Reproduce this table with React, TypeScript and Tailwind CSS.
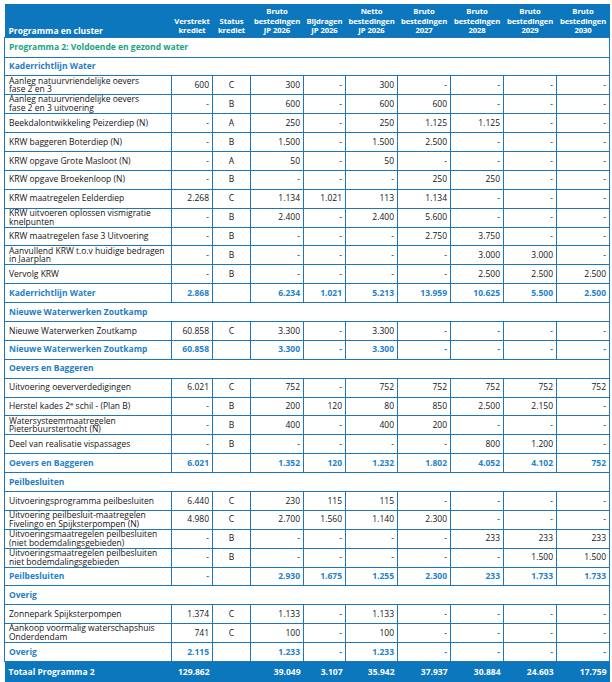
type Row = {
  kind: 'data' | 'total' | 'head';
  label: React.ReactNode;
  v?: string[];
};

const rows: Row[] = [
  { kind: 'head', label: 'Kaderrichtlijn Water' },
  { kind: 'data', label: 'Aanleg natuurvriendelijke oevers\nfase 2 en 3', v: ['600', 'C', '300', '-', '300', '-', '-', '-', '-'] },
  { kind: 'data', label: 'Aanleg natuurvriendelijke oevers\nfase 2 en 3 uitvoering', v: ['-', 'B', '600', '-', '600', '600', '-', '-', '-'] },
  { kind: 'data', label: 'Beekdalontwikkeling Peizerdiep (N)', v: ['-', 'A', '250', '-', '250', '1.125', '1.125', '-', '-'] },
  { kind: 'data', label: 'KRW baggeren Boterdiep (N)', v: ['-', 'B', '1.500', '-', '1.500', '2.500', '-', '-', '-'] },
  { kind: 'data', label: 'KRW opgave Grote Masloot (N)', v: ['-', 'A', '50', '-', '50', '-', '-', '-', '-'] },
  { kind: 'data', label: 'KRW opgave Broekenloop (N)', v: ['-', 'B', '-', '-', '-', '250', '250', '-', '-'] },
  { kind: 'data', label: 'KRW maatregelen Eelderdiep', v: ['2.268', 'C', '1.134', '1.021', '113', '1.134', '-', '-', '-'] },
  { kind: 'data', label: 'KRW uitvoeren oplossen vismigratie\nknelpunten', v: ['-', 'B', '2.400', '-', '2.400', '5.600', '-', '-', '-'] },
  { kind: 'data', label: 'KRW maatregelen fase 3 Uitvoering', v: ['-', 'B', '-', '-', '-', '2.750', '3.750', '-', '-'] },
  { kind: 'data', label: 'Aanvullend KRW t.o.v huidige bedragen\nin Jaarplan', v: ['-', 'B', '-', '-', '-', '-', '3.000', '3.000', '-'] },
  { kind: 'data', label: 'Vervolg KRW', v: ['-', 'B', '-', '-', '-', '-', '2.500', '2.500', '2.500'] },
  { kind: 'total', label: 'Kaderrichtlijn Water', v: ['2.868', '', '6.234', '1.021', '5.213', '13.959', '10.625', '5.500', '2.500'] },
  { kind: 'head', label: 'Nieuwe Waterwerken Zoutkamp' },
  { kind: 'data', label: 'Nieuwe Waterwerken Zoutkamp', v: ['60.858', 'C', '3.300', '-', '3.300', '-', '-', '-', '-'] },
  { kind: 'total', label: 'Nieuwe Waterwerken Zoutkamp', v: ['60.858', '', '3.300', '-', '3.300', '-', '-', '-', '-'] },
  { kind: 'head', label: 'Oevers en Baggeren' },
  { kind: 'data', label: 'Uitvoering oeververdedigingen', v: ['6.021', 'C', '752', '-', '752', '752', '752', '752', '752'] },
  {
    kind: 'data',
    label: (
      <>
        Herstel kades 2<sup className="text-[6px]">e</sup> schil - (Plan B)
      </>
    ),
    v: ['-', 'B', '200', '120', '80', '850', '2.500', '2.150', '-'],
  },
  { kind: 'data', label: 'Watersysteemmaatregelen\nPieterbuurstertocht (N)', v: ['-', 'B', '400', '-', '400', '200', '-', '-', '-'] },
  { kind: 'data', label: 'Deel van realisatie vispassages', v: ['-', 'B', '-', '-', '-', '-', '800', '1.200', '-'] },
  { kind: 'total', label: 'Oevers en Baggeren', v: ['6.021', '', '1.352', '120', '1.232', '1.802', '4.052', '4.102', '752'] },
  { kind: 'head', label: 'Peilbesluiten' },
  { kind: 'data', label: 'Uitvoeringsprogramma peilbesluiten', v: ['6.440', 'C', '230', '115', '115', '-', '-', '-', '-'] },
  { kind: 'data', label: 'Uitvoering peilbesluit-maatregelen\nFivelingo en Spijksterpompen (N)', v: ['4.980', 'C', '2.700', '1.560', '1.140', '2.300', '-', '-', '-'] },
  { kind: 'data', label: 'Uitvoeringsmaatregelen peilbesluiten\n(niet bodemdalingsgebieden)', v: ['-', 'B', '-', '-', '-', '-', '233', '233', '233'] },
  { kind: 'data', label: 'Uitvoeringsmaatregelen peilbesluiten\nniet bodemdalingsgebieden', v: ['-', 'B', '-', '-', '-', '-', '-', '1.500', '1.500'] },
  { kind: 'total', label: 'Peilbesluiten', v: ['-', '', '2.930', '1.675', '1.255', '2.300', '233', '1.733', '1.733'] },
  { kind: 'head', label: 'Overig' },
  { kind: 'data', label: 'Zonnepark Spijksterpompen', v: ['1.374', 'C', '1.133', '-', '1.133', '-', '-', '-', '-'] },
  { kind: 'data', label: 'Aankoop voormalig waterschapshuis\nOnderdendam', v: ['741', 'C', '100', '-', '100', '-', '-', '-', '-'] },
  { kind: 'total', label: 'Overig', v: ['2.115', '', '1.233', '-', '1.233', '-', '-', '-', '-'] },
];

const headers = [
  ['Verstrekt', 'krediet'],
  ['Status', 'krediet'],
  ['Bruto', 'bestedingen', 'JP 2026'],
  ['Bijdragen', 'JP 2026'],
  ['Netto', 'bestedingen', 'JP 2026'],
  ['Bruto', 'bestedingen', '2027'],
  ['Bruto', 'bestedingen', '2028'],
  ['Bruto', 'bestedingen', '2029'],
  ['Bruto', 'bestedingen', '2030'],
];

const widths = [167, 41, 38, 53, 42, 52, 53, 53, 53, 53];

const cell = 'border border-[#1f76b8] px-[3px] align-middle';

export default function App() {
  return (
    <div className="min-h-[682px] bg-white pl-[4px] pt-[4px] font-['Open_Sans',sans-serif] text-[8.5px] text-[#141414]">
      <table className="w-[605px] table-fixed border-collapse">
        <colgroup>
          {widths.map((w, i) => (
            <col key={i} style={{ width: w }} />
          ))}
        </colgroup>
        <thead>
          <tr className="h-[33px] bg-[#0d77bd] font-bold text-white">
            <th className="px-[4px] pb-[1px] text-left align-bottom leading-[9.5px]">Programma en cluster</th>
            {headers.map((h, i) => (
              <th key={i} className="pb-[1px] text-center align-bottom text-[7.7px] leading-[9.5px] whitespace-nowrap tracking-[-0.1px]">
                {h.map((l, j) => (
                  <div key={j}>{l}</div>
                ))}
              </th>
            ))}
          </tr>
        </thead>
        <tbody>
          <tr className="h-[20px]">
            <td colSpan={10} className={`${cell} px-[4px] font-bold text-[#17a37f]`}>
              Programma 2: Voldoende en gezond water
            </td>
          </tr>
          {rows.map((r, i) => {
            if (r.kind === 'head') {
              return (
                <tr key={i} className="h-[18.9px]">
                  <td colSpan={10} className={`${cell} px-[4px] font-bold text-[#1f7dc2]`}>
                    {r.label}
                  </td>
                </tr>
              );
            }
            const total = r.kind === 'total';
            return (
              <tr key={i} className={`h-[18.9px] ${total ? 'font-bold text-[#2582c6]' : ''}`}>
                <td className={`${cell} px-[4px] leading-[8.8px] whitespace-pre-line`}>{r.label}</td>
                {r.v!.map((v, j) => (
                  <td key={j} className={`${cell} ${j === 1 ? 'text-center' : 'text-right'}`}>
                    {v}
                  </td>
                ))}
              </tr>
            );
          })}
          <tr className="h-[21px] bg-[#0d77bd] font-bold text-white">
            <td className="px-[4px]">Totaal Programma 2</td>
            {['129.862', '', '39.049', '3.107', '35.942', '37.937', '30.884', '24.603', '17.759'].map((v, j) => (
              <td key={j} className="px-[3px] text-right">
                {v}
              </td>
            ))}
          </tr>
        </tbody>
      </table>
    </div>
  );
}
